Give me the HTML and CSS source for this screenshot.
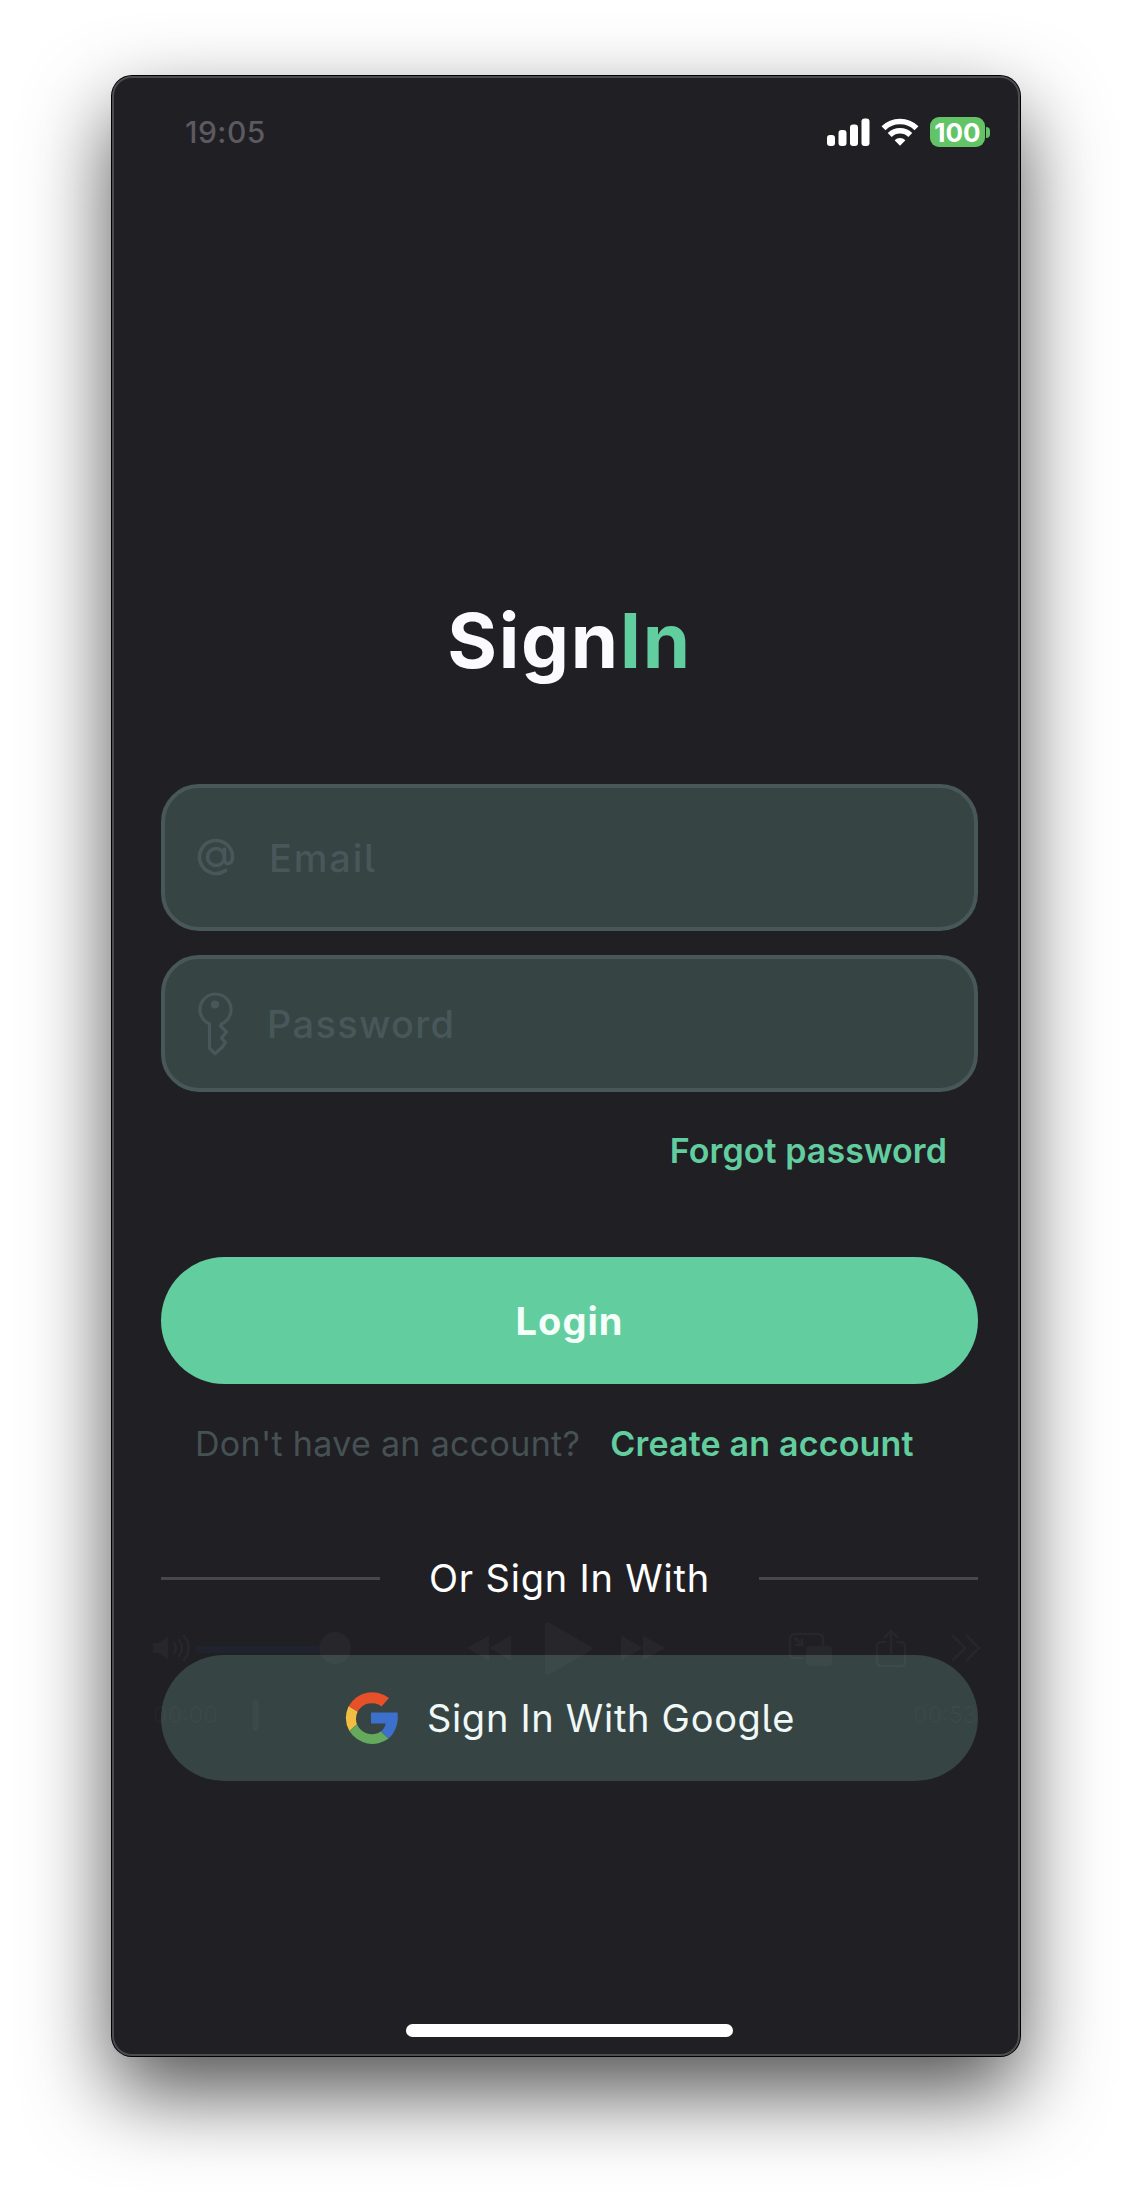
FILE: index.html
```html
<!DOCTYPE html>
<html lang="en">
<head>
<meta charset="utf-8">
<title>Sign In</title>
<link rel="stylesheet" href="styles.css">
</head>
<body>
<main class="window">
  <header class="status">
    <span class="time">19:05</span>
    <div class="indicators">
      <svg class="signal" width="43" height="28" viewBox="0 0 43 28" fill="#fff"><rect x="0" y="17" width="8" height="11" rx="3"/><rect x="11.500" y="12" width="8" height="16" rx="3"/><rect x="23" y="6.500" width="8" height="21.500" rx="3"/><rect x="34.500" y="0.500" width="8" height="27.500" rx="3"/></svg>
      <svg class="wifi" width="38" height="28" viewBox="0 0 38 28"><g fill="none" stroke="#fff" stroke-width="5.600"><path d="M2.500 10.300a23.500 23.500 0 0 1 33 0"/><path d="M8.700 17a14.700 14.700 0 0 1 20.600 0"/></g><path fill="#fff" d="M19 27.800l-5.400-5.500a7.700 7.700 0 0 1 10.800 0z"/></svg>
      <span class="battery"><b class="level">100</b></span>
    </div>
  </header>

  <h1 class="title">Sign<span class="accent">In</span></h1>

  <div class="field email">
    <svg class="at" width="38" height="38" viewBox="0 0 38 38" fill="none" stroke="#48575a" stroke-width="3.600" stroke-linecap="round"><circle cx="19" cy="19" r="8.500"/><path d="M27.500 11v10.500c0 6 8 5.500 8-2.500a16.500 16.500 0 1 0-7 13.500"/></svg>
    <span class="hint">Email</span>
  </div>
  <div class="field password">
    <svg class="key" width="36" height="64" viewBox="0 0 36 64" fill="none" stroke="#48575a" stroke-width="3.200" stroke-linejoin="round"><path d="M12.500 31.800a15.500 15.500 0 1 1 12 0L23.500 34l6 6-5 6 4 4.500-3.500 5-7.200 6.200-5.300-5.500z"/><circle cx="18" cy="12.500" r="2.500" fill="#48575a"/></svg>
    <span class="hint">Password</span>
  </div>
  <a class="forgot">Forgot password</a>

  <div class="button login"><span class="login-label">Login</span></div>
  <p class="signup"><span class="question">Don't have an account?</span><a class="create">Create an account</a></p>

  <div class="divider"><i class="rule"></i><span class="or">Or Sign In With</span><i class="rule"></i></div>

  <div class="button google">
    <svg class="g" width="54" height="54" viewBox="0 0 54 54"><path fill="#e75028" d="M4.600 15.300A27 27 0 0 1 45 7L37.500 15.500A16 16 0 0 0 13.600 20.800z"/><path fill="#f1bd42" d="M4.600 15.300A27 27 0 0 0 5.400 40L13 33.200A16 16 0 0 1 13.600 20.800z"/><path fill="#65a95c" d="M5.400 40A27 27 0 0 0 44.600 47.500L36.800 40.500A16 16 0 0 1 13 33.200z"/><path fill="#3d70cc" d="M27 21.500H53.500C54.800 32 51.500 41.500 44.600 47.500L36.800 40.500C39.500 38.500 41 36 41.600 32.500H27z"/></svg>
    <span class="google-label">Sign In With Google</span>
  </div>
  <div class="home"></div>

  <!-- faded media player controls, floating over the screen -->
  <svg class="player" width="850" height="130" viewBox="0 0 850 130" fill="#fff" fill-opacity=".03">
    <path d="M3 36h6l9-7v24l-9-7H3z"/>
    <g fill="none" stroke="#fff" stroke-opacity=".035" stroke-width="2.500" stroke-linecap="round"><path d="M24 36q4 5 0 10M29 33q6 8 0 16M34 29q9 12 0 24"/><path d="M652 51h-7a5 5 0 0 1-5-5V32a5 5 0 0 1 5-5h23a5 5 0 0 1 5 5v6M645 31l7 7M652 32v6h-6"/><path d="M735 35h-4a4 4 0 0 0-4 4v16a4 4 0 0 0 4 4h20a4 4 0 0 0 4-4V39a4 4 0 0 0-4-4h-4M741 46V24M735 30l6-6 6 6M803 29l12 12-12 12M817 29l12 12-12 12"/></g>
    <path fill="#1860a8" fill-opacity=".07" d="M46 39h122v7H46z"/>
    <circle cx="185" cy="41" r="16"/>
    <path d="M317 41l22-12.500v25zM339 41l22-12.500v25zM395 18q0-4 5-2l40 23q4 2 0 5l-40 23q-5 2-5-2zM471 28.500L493 41l-22 12.500zM493 28.500L515 41l-22 12.500z"/>
    <rect x="656" y="39" width="26" height="20" rx="4"/>
    <rect x="102.500" y="93" width="6" height="31" rx="3"/>
    <text class="clock" x="3" y="115.500">00:00</text><text class="clock" x="763" y="115.500">00:53</text>
  </svg>
</main>
</body>
</html>
```
FILE: styles.css
```css
* { box-sizing: border-box; }
body { margin: 0; background: #fff; font-family: Inter, "Liberation Sans", sans-serif; font-feature-settings: "cv05"; height: 2204px; padding: 76px 0 0 112px; white-space: nowrap; }
.window { position: relative; display: flex; flex-direction: column; width: 908px; height: 1980px; padding: 0 40px 0 47px; border: 2px solid #4c4b50; border-radius: 20px; background: #201f24; box-shadow: 0 0 0 1px #000, 0 36px 84px rgba(0,0,0,.69); }
.status { display: flex; align-items: center; justify-content: space-between; height: 108px; margin-right: -14px; padding-left: 24px; }
.time { font-size: 30px; font-weight: 500; letter-spacing: .5px; color: #5c5a60; }
.indicators { display: flex; align-items: center; }
.wifi { margin: 0 11px; }
.battery { position: relative; display: flex; align-items: center; justify-content: center; width: 55px; height: 30px; margin-right: 7px; border-radius: 9px; background: #62c466; }
.battery::after { content: ""; position: absolute; left: 56px; top: 10px; width: 4px; height: 11px; border-radius: 0 5px 5px 0; background: #62c466; }
.level { font-size: 26px; font-weight: 700; color: #fff; }
.title { height: 100px; margin: 404px 0 0; line-height: 100px; font-size: 76px; font-weight: 700; letter-spacing: 1.7px; text-align: center; color: #fbfbfe; }
.accent { color: #62cd9e; }
.field { display: flex; align-items: center; border: 4px solid #48575a; border-radius: 38px; background: #364443; padding-left: 32px; }
.email { height: 147px; margin-top: 94px; }
.password { height: 137px; margin-top: 24px; }
.at { margin: -2px 34px 0 0; }
.key { margin-right: 34px; }
.hint { font-size: 38px; font-weight: 500; color: #48575a; letter-spacing: 1.3px; }
.email .hint { letter-spacing: 1.8px; }
.forgot { align-self: flex-end; height: 40px; margin: 39px 31px 0 0; line-height: 40px; font-size: 34px; font-weight: 600; letter-spacing: .08px; color: #62cd9e; }
.button { display: flex; align-items: center; justify-content: center; border-radius: 64px; }
.login { height: 127px; margin-top: 86px; background: #62cd9e; }
.login-label { font-size: 38px; font-weight: 700; letter-spacing: 1px; color: #f4fffa; }
.signup { display: flex; gap: 30px; height: 40px; margin: 40px 0 0; padding-left: 34px; line-height: 40px; font-size: 34px; }
.question { letter-spacing: .32px; color: #465154; }
.create { font-weight: 600; letter-spacing: .18px; color: #62cd9e; }
.divider { display: flex; align-items: center; justify-content: space-between; height: 50px; margin-top: 89px; }
.rule { width: 219px; height: 3px; background: #48474c; }
.or { font-size: 38px; letter-spacing: .8px; color: #fff; }
.google { height: 126px; margin-top: 52px; background: #364443; }
.google-label { margin-left: 29px; font-size: 38px; letter-spacing: .7px; color: #eff8f6; }
.home { width: 327px; height: 13px; margin: 243px 0 0 245px; border-radius: 7px; background: #fff; }
.player { position: absolute; left: 36px; top: 1529px; }
.clock { font-size: 23px; }
```
